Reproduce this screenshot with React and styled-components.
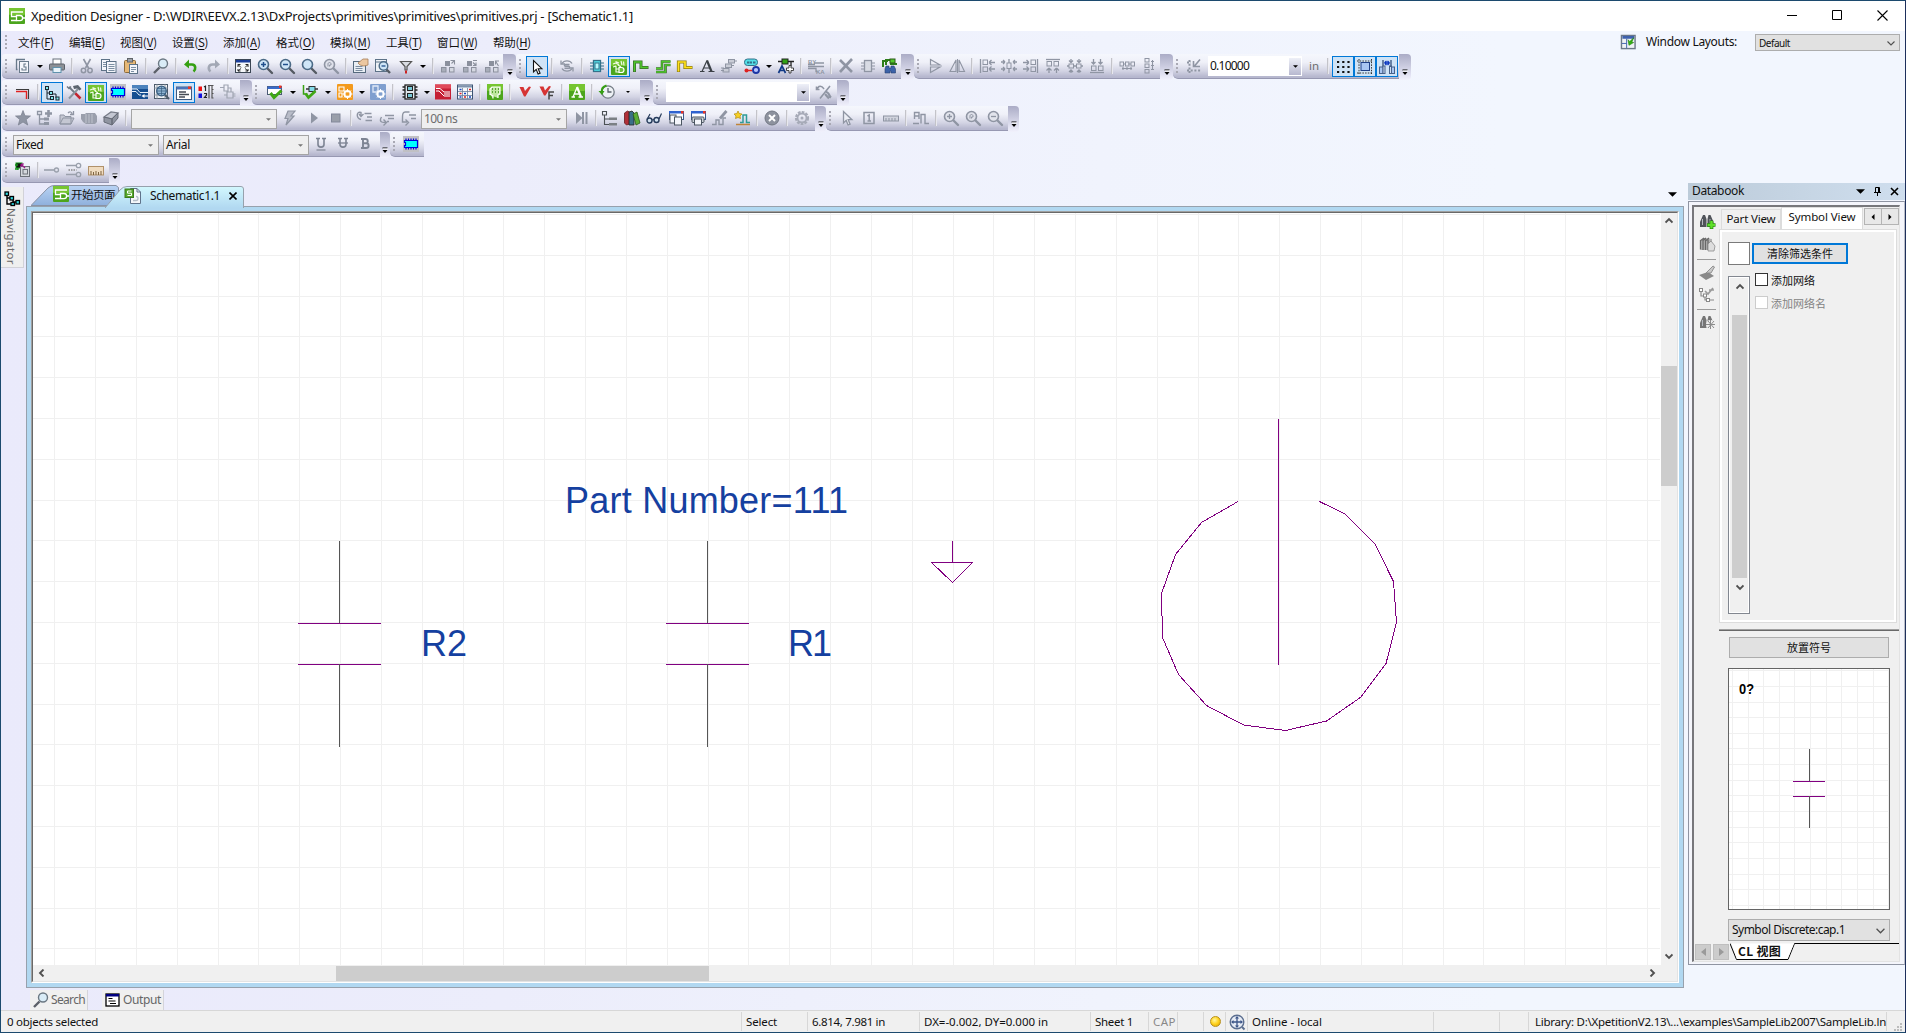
import React, { useLayoutEffect, useRef, useState } from 'react';
import styled, { createGlobalStyle, css } from 'styled-components';

const UI = `"Noto Sans", "Noto Sans CJK SC", sans-serif`;
const CJK = `"Noto Sans CJK SC", "Noto Sans", sans-serif`;

const Global = createGlobalStyle`
  * { box-sizing: border-box; }
  html, body { margin: 0; padding: 0; overflow: hidden; }
  body { font: 12px ${UI}; color: #000; }
  svg { display: block; flex: none; }
`;

/* ---------- text that keeps a fixed run length ---------- */

const TextRun = styled.span`
  display: inline-block;
  flex: none;
  white-space: pre;
  font-family: ${(p) => (p.$cjk ? CJK : UI)};
  font-size: ${(p) => p.$size || 11.5}px;
  font-weight: ${(p) => (p.$bold ? 700 : 400)};
  color: ${(p) => p.$color || '#111'};
  line-height: 16px;
  u { text-underline-offset: 2px; }
`;

function Label({ width, size, cjk, bold, color, vertical, children }) {
  const ref = useRef(null);
  const [spacing, setSpacing] = useState(0);
  useLayoutEffect(() => {
    if (!width || !ref.current) return;
    const el = ref.current;
    const r = document.createRange();
    r.selectNodeContents(el);
    const box = r.getBoundingClientRect();
    const natural = vertical ? box.height : box.width;
    setSpacing((width - natural) / el.textContent.length);
  }, [width, vertical]);
  return (
    <TextRun ref={ref} $size={size} $cjk={cjk} $bold={bold} $color={color} style={{ letterSpacing: spacing }}>
      {children}
    </TextRun>
  );
}

/* ---------- icons ---------- */

const G = '#8f95a3';
const D = '#4a5560';

const P = ({ d, s = G, w = 1.3, f = 'none' }) => <path d={d} stroke={s} strokeWidth={w} fill={f} />;
const R = ({ x, y, w, h, f = 'none', s = 'none', r = 0, sw = 1 }) => (
  <rect x={x} y={y} width={w} height={h} fill={f} stroke={s} rx={r} strokeWidth={sw} />
);

const Lens = ({ c = '#4b6a86', f = '#cfe6f7', h = '#555b63' }) => (
  <>
    <path d="M10 10l5 5" stroke={h} strokeWidth="2.4" strokeLinecap="round" />
    <circle cx="6.5" cy="6.5" r="5" fill={f} stroke={c} strokeWidth="1.6" />
  </>
);
const GreenTile = ({ children }) => (
  <>
    <rect x="0" y="0" width="16" height="16" rx="1" fill="#4ca51d" />
    <rect x="0" y="0" width="16" height="7" rx="1" fill="#76c531" />
    {children}
  </>
);
const Logo = () => (
  <GreenTile>
    <path d="M14 4H2.500v4.500H8M2 12.500h5.500" stroke="#fff" strokeWidth="1.3" fill="none" />
    <path d="M7.500 7.500H11a2.600 2.600 0 010 5.200H7.500zM13.500 10H16" stroke="#fff" strokeWidth="1.3" fill="none" />
  </GreenTile>
);
const GateTile = () => (
  <GreenTile>
    <path d="M2 5l3-1 3 2M2 8l3-1M4.500 2.500L8 4M10 2l1 4M12.500 2.500l.5 4M7 6l3 2M5 7v6h3M5 10h3" stroke="#f0fbe6" strokeWidth="1.2" fill="none" />
    <path d="M8 8.500h2.500a2.500 2.500 0 010 5H8z" fill="#6fbf3c" stroke="#fff" strokeWidth="1.2" />
  </GreenTile>
);
const Chip = () => (
  <>
    <rect x="0" y="0" width="16" height="16" fill="#c0c0c4" />
    <path d="M3 2.500v11M5.500 2.500v11M8 2.500v11M10.500 2.500v11M13 2.500v11" stroke="#0000d8" strokeWidth="1.2" />
    <path d="M1.500 4.500h13v7h-13v-2h1v-3h-1z" fill="#00ffff" stroke="#0000e0" strokeWidth="1.2" />
  </>
);
const Boxes = ({ extra }) => (
  <>
    <R x={1.500} y={9.500} w={4.500} h={4.500} f="#a8adb9" s="#8b909d" />
    <R x={5.500} y={3.500} w={4} h={4} f="#8b909d" s="#8b909d" />
    <R x={9.500} y={9.500} w={4.500} h={4.500} f="#d5d8e2" s="#8b909d" />
    <P d={extra} s="#8b909d" w={1.100} />
  </>
);
const Pins = ({ c, f = 'none' }) => (
  <>
    <path d="M1 5h3M1 8h3M1 11h3M12 5h3M12 8h3M12 11h3M6 2v12" stroke={c} strokeWidth="1.2" />
    <rect x="4.500" y="2.500" width="7" height="11" fill={f} stroke={c} strokeWidth="1.3" />
  </>
);
const Tick = () => <path d="M3.500 9l3.500 4.500 7.500-7" stroke="#3fa714" strokeWidth="3" fill="none" />;
const Binoc = ({ c = '#50545a', extra }) => (
  <>
    <path d="M4 2h2l1.500 4V14H1V9zM9.500 2h2L14.500 9v5H8.500V6z" fill={c} />
    <path d="M3.500 6v6M11 6v6" stroke="#b5b9bf" strokeWidth="1" />
    {extra}
  </>
);
const Sheet = ({ x, y, c, w = 8, h = 11, f = '#f4f6fb' }) => <rect x={x} y={y} width={w} height={h} fill={f} stroke={c} />;

const ICONS = {
  copyView: <><P d="M2.500 11.500h-1V1.500H10" s="#68798a" /><Sheet x={4.500} y={3.500} w={9} h={11} c="#68798a" /><P d="M7 10v2h4V9H9V6h2" s="#68798a" w={1.100} /></>,
  print: <><R x={4} y={1} w={8} h={6} f="#fff" s="#68707a" /><R x={0.500} y={6} w={15} h={6} r={1} f="#8c9096" s="#5b6068" /><R x={4} y={9.500} w={8} h={5} f="#e9f3fa" s="#5f92ad" /></>,
  cut: <><P d="M4.500 1l5 9M11.500 1l-5 9" w={1.600} /><circle cx="4.500" cy="12.500" r="2.200" fill="none" stroke={G} strokeWidth="1.500" /><circle cx="11" cy="12.500" r="2.200" fill="none" stroke={G} strokeWidth="1.500" /></>,
  copy: <><Sheet x={0.500} y={1.500} w={8} h={11} c="#5d7287" /><Sheet x={5.500} y={3.500} w={9.500} h={11} c="#5d7287" /><P d="M7.500 6.500h6M7.500 8.500h6M7.500 10.500h6M7.500 12.500h6M2 4.500h3M2 6.500h3M2 8.500h3" s="#7c8fa3" w={1} /></>,
  paste: <><R x={1.500} y={2.500} w={11} h={12} r={1} f="#e6b877" s="#8c6a39" /><R x={4.500} y={0.500} w={5} h={3.500} f="#9da1a6" s="#60646a" /><Sheet x={6.500} y={6.500} w={8} h={9} c="#5d7287" /><P d="M8 9.500h5M8 11.500h5M8 13.500h3" s="#7c8fa3" w={1} /></>,
  find: <><P d="M6.500 9.500L1 15" s="#5c6068" w={2.400} /><circle cx="10" cy="5.500" r="4.500" fill="#d9ecf7" stroke="#6b7883" strokeWidth="1.400" /></>,
  undo: <><P d="M5 6.500h4c4 0 4 5 1.500 7" s="#35a012" w={2.600} /><path d="M1 6.500l5-5v9z" fill="#35a012" /></>,
  redo: <><P d="M11 6.500H7.500c-4.500 0-4.500 5-2 7" s="#a3a8b5" w={2.600} /><path d="M15 6.500l-5-5v9z" fill="#a3a8b5" /></>,
  fit: <><R x={0.500} y={1.500} w={15} h={13} f="#f5f7fa" s="#3b4654" /><R x={1} y={2} w={14} h={2.500} f="#1a3d9a" /><P d="M3 9V6.500h2.500M3 6.500l3 3M13 9V6.500h-2.500M13 6.500l-3 3M3 11v2h2.500M13 11v2h-2.500M3 13l3-2.500M13 13l-3-2.500" s="#222" w={1} /></>,
  zoomIn: <><Lens /><P d="M4 6.500h5M6.500 4v5" s="#20508c" w={1.500} /></>,
  zoomOut: <><Lens /><P d="M4 6.500h5" s="#20508c" w={1.500} /></>,
  zoom: <Lens />,
  zoomOff: <><Lens c={G} f="#dfe1ea" h={G} /><path d="M5 8.500V6c0-2 3-2 3 0v1H6.500v1.500" fill="none" stroke={G} /></>,
  zoomInOff: <><Lens c={G} f="#e2e4ec" h={G} /><P d="M4 6.500h5M6.500 4v5" /></>,
  zoomOutOff: <><Lens c={G} f="#e2e4ec" h={G} /><P d="M4 6.500h5" /></>,
  props: <><R x={0.500} y={3.500} w={12} h={11} f="#e9eef4" s="#566a7e" /><P d="M2.500 8.500h7M2.500 10.500h7M2.500 12.500h7" s="#7b8ca0" w={1} /><path d="M5 5l5-4h5v6l-4 1-4-1z" fill="#ecc7a0" stroke="#a87f58" strokeWidth="0.800" /></>,
  findPage: <><R x={0.500} y={1.500} w={11} h={12} f="#eef2f6" s="#5d7287" /><P d="M1 4h10" s="#5d7287" w={1} /><P d="M11 11l4 4" s="#555b63" w={2.400} /><circle cx="8.500" cy="8" r="4.300" fill="#cfe6f7" stroke="#4b6a86" strokeWidth="1.400" /><P d="M6.500 8h4" s="#20508c" /></>,
  filter: <><path d="M2.500 3.500h11L9 8.500V12H7V8.500z" fill="#d9dce2" stroke="#555" strokeWidth="1.200" /><R x={7} y={12.500} w={2} h={3} f="#c22" /></>,
  hier1: <Boxes extra="M10.500 2.500h4v4M11.500 5.500l3-3" />,
  hier2: <Boxes extra="M11 2.500h4M11 4.500l3 3M14 4.500v3h-3" />,
  hier3: <Boxes extra="M11.500 3l3 5M15 3h-3.500v3.500" />,
  pointer: <path d="M4.500 1.500v11.500l2.700-2.600 1.900 4.600 2-0.800-1.900-4.500h3.700z" fill="#fff" stroke="#111" strokeWidth="1.100" />,
  pointerOff: <path d="M4.500 1.500v11.500l2.700-2.600 1.900 4.600 2-0.800-1.900-4.500h3.700z" fill="#eceef5" stroke={G} strokeWidth="1.300" />,
  reload: <><P d="M3 5.500c2-3.500 8-3.500 10 0M13 10.500c-2 3.500-8 3.500-10 0M10.500 6.500H6.500c-1.500 0-1.500 1.700 0 1.700h3c1.500 0 1.500 2 0 2H5.500" w={1.400} /><P d="M2 2.500v3.500h4M14 13.500V10h-4" /></>,
  chip: <><Pins c="#35718a" f="#52e0e8" /><R x={6} y={5} w={4} h={6} f="#b7fbff" s="#35718a" /></>,
  gate: <GateTile />,
  wire: <><P d="M1.500 14V4H8v5.500h7.500" s="#3b6a2c" w={3} /><P d="M1.500 13.500V4H8v5.500h7" s="#4fc92b" w={1.500} /></>,
  bus: <><P d="M1 10.500h6v-7h8.500M1 14h9.500V7h5" s="#3b6a2c" w={2.600} /><P d="M1 10.500h6v-7h8.500M1 14h9.500V7h5" s="#4fc92b" w={1.300} /></>,
  net: <><P d="M1.500 14V4H8v5.500h7.500" s="#8c7a10" w={3.200} /><P d="M1.500 13.500V4H8v5.500h7" s="#ffe21c" w={1.700} /></>,
  bigA: <><P s="#3b4046" w={1.200} d="M3 13.500L8 2.500M5 10h6M1 13.500h4.500M9.500 13.500h6" /><P s="#3b4046" w={2.200} d="M8 2.500l4.500 11" /></>,
  array: <><R x={7.500} y={1.500} w={6} h={3.500} f="#c9ccd6" s={G} /><R x={4.500} y={6} w={6} h={3.500} f="#c9ccd6" s={G} /><R x={2} y={10.500} w={6} h={3.500} f="#c9ccd6" s={G} /><P d="M13 3h3M10 7.500h3M0 12.500h3M0 10h3" w={1} /></>,
  linkNets: <><R x={0.500} y={1} w={13} h={6.500} r={3} f="#52e0e8" s="#35718a" /><P d="M3 4.500h2.500M6 4.500h2M9 4.500h2.500" s="#35718a" w={2} /><P d="M2.500 12.500h6" s="#d22" w={1.500} /><circle cx="2.500" cy="12.500" r="2" fill="#d22" /><circle cx="12" cy="12" r="3" fill="#b7c5ff" stroke="#1c36a5" strokeWidth="1.800" /></>,
  textAdd: <><R x={4} y={1} w={6} h={5} f="#31a214" s="#222" /><P d="M0 3.500h4M10 3.500h6M13 3.500v5" s="#222" /><P d="M0.500 15L4 8l3.500 7M2 12.500h4" s="#123a86" w={1.700} /><path d="M11 7.500h2v2.500h2.500v2.500H13V15h-2v-2.500H8.500V10H11z" fill="#fff" stroke="#333" strokeWidth="0.900" /></>,
  breaks: <><P d="M0 8.500h16M0 6.500h7M6 5h10M0 10.500h8v3h1" w={1.300} /><text x="0" y="5.500" fontSize="6" fontWeight="700" fill={G} fontFamily="Liberation Sans">BY</text><text x="8" y="16" fontSize="6" fontWeight="700" fill={G} fontFamily="Liberation Sans">KA</text></>,
  del: <P d="M2 2l12 12M14 1L2 14" w={2.600} />,
  chipOff: <Pins c={G} f="#d8dbe4" />,
  findChip: <><P d="M1 9V3h5M4 7V2h5v4h6" s="#2d7d1a" w={2} /><R x={8} y={1} w={5} h={4} f="#52c92b" s="#2d5a1a" /><path d="M4 8h3v2h2V8h3l1.500 3v4H9v-2H8v2H3v-4z" fill="#3c62a8" stroke="#253f70" strokeWidth="0.600" /></>,
  flipV: <P d="M3.500 7V1.500L13 7zM3.500 9v5.500L13 9z" w={1.200} />,
  flipH: <P d="M7 2v11.500H1zM10 2v11.500h5.500zM8.500 1v14" w={1.100} />,
  alLeft: <><P d="M1.500 1v14" /><R x={4} y={2} w={4.500} h={4.500} s={G} /><R x={4} y={9} w={4.500} h={4.500} s={G} /><P d="M10 4.500h6M10 4.500l2.500-2.500M10 4.500l2.500 2.500M10 11h6M10 11l2.500-2.500M10 11l2.500 2.500" /></>,
  alMid: <><R x={6} y={5} w={4} h={5.500} s={G} /><P d="M8 1v4M8 10.500V15M0 4h4M4 4L2 2M4 4L2 6M0 11h4M4 11l-2-2M4 11l-2 2M16 4h-4M12 4l2-2M12 4l2 2M16 11h-4M12 11l2-2M12 11l2 2" /></>,
  alRight: <><P d="M14.500 1v14" /><R x={8} y={2} w={4.500} h={4.500} s={G} /><R x={8} y={9} w={4.500} h={4.500} s={G} /><P d="M0 4.500h6M6 4.500L3.500 2M6 4.500L3.500 7M0 11h6M6 11l-2.500-2.500M6 11l-2.500 2.500" /></>,
  alTop: <><P d="M1 1.500h14" /><R x={2} y={3.500} w={4.500} h={4.500} s={G} /><R x={9} y={3.500} w={4.500} h={4.500} s={G} /><P d="M4 15v-5M4 10l-2.500 2.500M4 10l2.500 2.500M11.500 15v-5M11.500 10L9 12.500M11.500 10l2.500 2.500" /></>,
  alCenter: <><R x={2} y={6} w={4.500} h={4} s={G} /><R x={9.500} y={6} w={4.500} h={4} s={G} /><P d="M0 8h2M6.500 8h3M14 8h2M4 1v3M2 2.500l2 2 2-2M12 1v3M10 2.500l2 2 2-2M4 15v-3M2 14l2-2 2 2M12 15v-3M10 14l2-2 2 2" /></>,
  alBottom: <><P d="M1 14.500h14" /><R x={2.500} y={8} w={4.500} h={4.500} s={G} /><R x={9.500} y={8} w={4.500} h={4.500} s={G} /><P d="M4.500 1v5M2.500 4l2 2 2-2M11.500 1v5M9.500 4l2 2 2-2" /></>,
  distH: <><R x={1} y={4} w={3.500} h={4} s={G} /><R x={6.500} y={4} w={3.500} h={4} s={G} /><R x={12} y={4} w={3.500} h={4} s={G} /><P d="M3 10.500h10M4 9v3M8 9v3M12 9v3M4 6h3M9 6h3" w={1.100} /></>,
  distV: <><R x={4} y={0.500} w={4} h={3.500} s={G} /><R x={4} y={6} w={4} h={3.500} s={G} /><R x={4} y={11.500} w={4} h={3.500} s={G} /><P d="M11.500 2v10M10 3.500h3M10 7.500h3M10 11.500h3" w={1.100} /></>,
  snap: <><path d="M3.500 2v13M1 12.500h14M1 4.500h4" stroke={G} strokeWidth="2" strokeDasharray="2 1.700" fill="none" /><P d="M14 1.500L8.500 8M7.500 3v5.500H14" w={1.600} /></>,
  dots: <path d="M2 3h13M2 8h13M2 13h13" stroke="#111" strokeWidth="2.200" strokeDasharray="2.200 3" />,
  crop: <><R x={4} y={3.500} w={8.500} h={8} f="#a9c6f2" s="#1f3f86" /><path d="M2 0v16M14.500 0v16M0 2h16M0 14h16" stroke="#333" strokeWidth="1" strokeDasharray="1.500 1.200" /></>,
  fence: <><P d="M4 1v7M12 1v7" s="#47618a" w={1.500} /><P d="M5.500 4h5M5.500 4l2-2M5.500 4l2 2M10.500 4l-2-2M10.500 4l-2 2" s="#0a36c0" /><R x={0.500} y={8} w={3.500} h={6.500} f="#a9c6f2" s="#47618a" /><R x={4} y={7} w={2} h={7.500} f="#cfe0f8" s="#47618a" /><R x={10.500} y={7} w={2} h={7.500} f="#cfe0f8" s="#47618a" /><R x={12.500} y={8} w={3} h={6.500} f="#a9c6f2" s="#47618a" /></>,

  corner: <><P d="M1 5.500h12.500V15" s="#3b3b3b" w={1.100} /><P d="M1 7.500h10.500V15" s="#e02020" w={1.400} /></>,
  tree: <><P d="M3 4v10h3M3 8h3M9 9h3v4" s="#1a2630" w={1} /><R x={1.500} y={1.500} w={3} h={3} f="#7fe9ee" s="#1a2630" /><R x={5.500} y={6.500} w={3} h={3} f="#7fe9ee" s="#1a2630" /><R x={6.500} y={11.500} w={3} h={3} f="#7fe9ee" s="#1a2630" /><R x={12} y={12} w={3} h={3} f="#7fe9ee" s="#1a2630" /></>,
  tools: <><P d="M9 9l5.500 5.500" s="#c32530" w={2.500} /><P d="M3 3l6 6" s="#707a84" w={1.800} /><path d="M7 2l5-1 3.500 4-2 1.500L11 4.500 8 5z" fill="#5d6670" /><P d="M12 5L3 14.500" s="#8a939c" w={2} /><P d="M1 2.500l2 2 2-2" s="#707a84" w={1.500} /></>,
  chipBlue: <Chip />,
  waveBlue: <><R x={0} y={1} w={16} h={14} f="#164f91" /><R x={0} y={1} w={16} h={4} f="#4c83bd" /><P d="M0 5h5l3 3.500h8M0 7.500h4l3 3.500h2" s="#e8f1fa" w={1} /><path d="M9.500 12l3-2v1.400H16v1.200h-3.500V14z" fill="#fff" /></>,
  globeFind: <><R x={0.500} y={0.500} w={13} h={14} f="#eef1f4" s="#4b5a6a" /><P d="M3 0v15M11 0v15M0 4h14M0 11h14" s="#7f8b98" w={0.800} /><P d="M11 11l4 4" s="#4b5a6a" w={2.200} /><circle cx="7.500" cy="7" r="4.800" fill="#8fb4d2" stroke="#365d80" strokeWidth="1.300" /><P d="M3 7h9M7.500 2.500v9M4 4.500h7M4 9.500h7" s="#365d80" w={0.700} /></>,
  output: <><R x={0.500} y={2} w={15} h={12.500} f="#fff" s="#3e5a80" /><R x={0.500} y={2} w={15} h={2.500} f="#4a73b8" /><R x={12} y={1.500} w={3} h={2.500} f="#e32" /><P d="M3 7h7M3 9.500h10M3 12h6" s="#454b55" /></>,
  order: <><R x={0.500} y={2.500} w={3.500} h={4.500} f="#e11" /><R x={0.500} y={9.500} w={3.500} h={4.500} f="#11d" /><P d="M7.500 1.500v5.500M6 3l1.500-1M6 9.500h2.500v1.500L6.500 13.500H9" s="#222" w={1.200} /><P d="M11 1.500v13M14 1.500v13M10 1.500h5.500M14 5.500h1.500M14 9.500h1.500M14 14h1.500" s="#555" w={1.200} /></>,
  gatesOff: <><P d="M0 3.500h4M4 1h4v6H4zM8 4h3v4M7 8h6v6H7zM4 11h3M13 10h2.500M13 12h2.500" s="#a0a5b2" w={1.200} /></>,
  check1: <><R x={0.500} y={2.500} w={14} h={8} f="#fff" s="#4a5a75" /><R x={0.500} y={2.500} w={14} h={2.500} f="#3a6bc9" /><R x={12} y={1.500} w={2.500} h={2.500} f="#e32" /><Tick /></>,
  check2: <><P d="M1.500 1v9h4" s="#39a312" w={1.500} /><R x={7} y={2.500} w={6} h={5} f="#84dbe8" s="#333" /><P d="M4 5h3M13 5h3" s="#333" /><path d="M3.500 9.500l3 4 7-6.500" stroke="#3fa714" strokeWidth="2.800" fill="none" /></>,
  gearOrange: <><R x={0} y={0} w={16} h={16} r={1} f="#f39a1c" /><P d="M2 3h5v4H2zM2 9h3v4H2z" s="#fff" w={1.100} /><circle cx="10.500" cy="10" r="3.200" fill="none" stroke="#fff" strokeWidth="1.700" /><path d="M10.500 5v10M5.500 10h10M7 6.500l7 7M14 6.500l-7 7" stroke="#fff" strokeWidth="1" /><circle cx="10.500" cy="10" r="1.700" fill="#f39a1c" /></>,
  gearBlue: <><R x={0} y={0} w={16} h={16} r={1} f="#7f9fcf" /><P d="M3 2h5v6H3z" s="#dfe9f8" w={1.300} /><circle cx="10.500" cy="10" r="3.200" fill="none" stroke="#fff" strokeWidth="1.700" /><path d="M10.500 5v10M5.500 10h10M7 6.500l7 7M14 6.500l-7 7" stroke="#fff" strokeWidth="1" /><circle cx="10.500" cy="10" r="1.700" fill="#7f9fcf" /></>,
  film: <><R x={3} y={1} w={10} h={14} f="#dfe6ea" s="#222" sw={1.300} /><R x={5.500} y={2.500} w={5} h={4} f="#78c9d8" s="#222" /><R x={5.500} y={9.500} w={5} h={4} f="#78c9d8" s="#222" /><P d="M0.500 3H3M0.500 6H3M0.500 10H3M0.500 13H3M13 3h2.500M13 6h2.500M13 10h2.500M13 13h2.500" s="#222" w={1.600} /></>,
  waveRed: <><R x={0} y={0.500} w={16} h={15} f="#c51f34" /><R x={0} y={0.500} w={16} h={4} f="#e04a5a" /><P d="M1 4.500h4l4 3.500h6M1 7h3l5 5h6M9 10h6" s="#fff" w={1} /></>,
  calendar: <><R x={0.500} y={1} w={15} h={14} f="#f7f9fb" s="#3b5373" /><R x={1} y={1.500} w={14} h={2} f="#7f93ad" /><P d="M5.500 4v11M10.500 4v11M1 7.500h14M1 11.500h14" s="#6d7f97" w={0.800} /><P d="M2.500 5.500h2M7 9.500h2M12 13h2M2.500 13h2" s="#1446c5" w={1.500} /><P d="M7 13h2M12 5.500h2M2.500 9.500h2" s="#d22" w={1.500} /></>,
  greenMap: <GreenTile><path d="M3 11V5l2-2h8v7l-2 1v3M3 10l3 2v2.500" fill="#bfe6a0" stroke="#fff" strokeWidth="1.200" /><path d="M5 5h1M8 5h1M11 5h1M5 8h1M8 8h1M11 8h1" stroke="#3b9015" strokeWidth="1.400" /></GreenTile>,
  redV: <path d="M2.500 3h4l1.500 4 4-4.500L14 3 8.500 12.500 7 12.500z" fill="#d63434" />,
  redVF: <><path d="M0.500 2.500h4l1.500 4 4-4.500 2 .5-5.500 9H5z" fill="#d63434" /><P d="M10 15.500V8h5M10 11.500h4" s="#444" w={1.500} /></>,
  greenA: <GreenTile><path d="M4 13L8 3.500M5.500 10h5M2.500 13h3.500M9.500 13h4.500" fill="none" stroke="#fff" strokeWidth="1.300" /><path d="M8 3l4 10" stroke="#fff" strokeWidth="2.200" /></GreenTile>,
  clock: <><circle cx="9" cy="8" r="6.200" fill="#edf1f5" stroke="#737b85" strokeWidth="1.300" /><P d="M9 4v4h3.500" s="#59616b" /><P d="M7.500 1.500C4 2.500 2.500 5 2.800 8" s="#35a012" w={2.200} /><path d="M-0.500 7h6L3 11z" fill="#35a012" /></>,
  brush: <><P d="M0.500 5.500L3 2.500c3-1 4 1 5 2.500M0.500 2.500v3h3M14 2L4 14.500" w={1.600} /><P d="M10 8c3 0 3 4 5 5.500M9 10l4 4.500" w={2.200} /></>,

  star: <path d="M8 0.500l2 5.300 5.500.2-4.300 3.500 1.500 5.500L8 12l-4.700 3 1.500-5.500L.5 6 6 5.800z" fill={G} stroke="#787e8c" strokeWidth="0.700" />,
  treeAdd: <><P d="M2.500 4.500V14H7M2.500 9H7M0.500 1.500h4v3h-4z" /><R x={7} y={7.500} w={5} h={3} f={G} /><R x={7} y={12} w={5} h={3} f={G} /><P d="M11.500 0v7M8 3.500h7" w={2.600} /></>,
  folder: <><path d="M1 14V5h4l1 1.500h6V14zM1 14l3-6h11l-3 6z" fill="#c4c7d2" stroke={G} /><P d="M9 3c2-2 4-1 4 1M14.500 1v3.500H11" /></>,
  coil: <><path d="M0 4h4l1-1h9l2 3v6l-2 2H5l-3-2-2-3z" fill="#9a9fac" /><P d="M5 4v9M8 4v9M11 4v9" s="#c3c6d0" w={0.900} /></>,
  books2: <><path d="M1 7l7-5 7 1-6 6z" fill="#c4c7d2" stroke="#777c88" strokeWidth="1.200" /><path d="M1 7l8 2v6l-8-3zM9 9l6-6v5l-6 7z" fill="#9095a1" stroke="#666b77" strokeWidth="1" /></>,
  bolt: <path d="M6 1h7L9 6h3L4 15l2-6.500H3z" fill="#b8bcc8" stroke={G} strokeWidth="1.200" />,
  play: <path d="M5 2.500v11l7-5.500z" fill={G} />,
  stop: <R x={3.500} y={4} w={8.500} h={8} f="#9a9faa" s="#82889a" />,
  step1: <P d="M4 9.500C-1 8-1 1 4 2.500V6M2 4l2 2.500L6.500 4M7.500 3.500h7M10 7h5M8.500 10.500H15" w={1.400} />,
  step2: <P d="M2.500 7c-3 5 1 6 4.500 5M4.500 9.500l3 3-3 3M6 5.500h9M9 8.500h6M8 11.500h2" w={1.400} />,
  step3: <P d="M8.500 2H4C1 2 1.500 6 1.500 12H6M4.500 9.500l3 3-3 3M8 5h7M10 8.500h5" w={1.400} />,
  skip: <><path d="M2 2v12l6.500-6z" fill={G} /><P d="M9 2v12M12.500 2v12" w={2} /></>,
  treeList: <><P d="M2.500 5v9.500H7M2.500 9H7M0.500 1.500h4v3.500h-4z" s="#4b5054" w={1.100} /><R x={7} y={7.500} w={8} h={2.500} f="#7b8084" /><R x={7} y={13} w={8} h={2.500} f="#7b8084" /></>,
  books: <><path d="M0.500 3l3-2 2 1v12l-3 1-2-2z" fill="#b03038" stroke="#661c20" strokeWidth="0.800" /><path d="M5 2l3-1 2 2v12H5z" fill="#3a6f88" stroke="#222" strokeWidth="0.800" /><path d="M9 4l4-2 3 11-4 2z" fill="#5cae35" stroke="#27581a" strokeWidth="0.800" /></>,
  glasses: <><circle cx="3.500" cy="10.500" r="2.500" fill="#d5e5f2" stroke="#273c5c" strokeWidth="1.400" /><circle cx="10.500" cy="10" r="2.500" fill="#d5e5f2" stroke="#273c5c" strokeWidth="1.400" /><P d="M1 9.500L4 4M13 9l2.500-5.500M6 10l2-.5" s="#273c5c" w={1.200} /></>,
  winCopy: <><R x={1.500} y={1.500} w={14} h={8} f="#fff" s="#3a5b90" /><R x={1} y={1} w={14.500} h={2.500} f="#2e62d0" /><R x={13} y={1} w={2.500} h={2.500} f="#e32" /><Sheet x={2} y={5} w={6} h={8} c={D} /><Sheet x={6.500} y={7} w={7} h={8} c={D} /></>,
  winPrint: <><R x={1.500} y={1.500} w={14} h={8} f="#fff" s="#3a5b90" /><R x={1} y={1} w={14.500} h={2.500} f="#2e62d0" /><R x={13} y={1} w={2.500} h={2.500} f="#e32" /><R x={2} y={7} w={12} h={5.500} r={1} f="#cdd2d8" s={D} /><Sheet x={4.500} y={9} w={7} h={6} c={D} /></>,
  waveBrush: <><P d="M0 14.500h4V10h3v4.500h4V8h3" w={1.400} /><P d="M14.500 1L8 8.500" w={2.800} /></>,
  waveStar: <><P d="M6 12.500h3V5h3.500v7.500H16" s="#2e9c98" w={1.500} /><path d="M4 1l1.200 2.500L8 4 6 6l.5 2.500L4 7.500 1.500 8.500 2 6 0 4l2.800-.5z" fill="#f5cf25" stroke="#b08a10" strokeWidth="0.700" /><P d="M2 14.500h14" s="#c08438" w={1.500} /></>,
  stopX: <><circle cx="8" cy="8" r="7" fill="#8d929e" stroke="#737884" /><P d="M5 5l6 6M11 5l-6 6" s="#fff" w={2} /></>,
  gearOff: <><circle cx="8" cy="8" r="5.700" fill="none" stroke="#a7abb8" strokeWidth="2.800" strokeDasharray="2.600 1.100" /><circle cx="8" cy="8" r="4.500" fill="none" stroke="#a7abb8" strokeWidth="1.800" /><circle cx="8" cy="8" r="1.500" fill="#a7abb8" /></>,
  one: <><R x={3} y={2.500} w={10} h={11} s={G} sw={1.500} /><P d="M6.500 6l1.700-1V11M6.500 11h3.500" w={1.500} /></>,
  ruler: <><R x={0.500} y={6} w={15} h={5} f="#d0d3dd" s={G} /><P d="M3 8v3M6 8v3M9 8v3M12 8v3" w={1} /></>,
  waveA: <><P d="M1.500 9V2.500h4.500v6.500M1.500 6h4.500M0 13.500h6M8 13.500V4.500h4v9h4" w={1.400} /></>,
  under: <><P d="M5 2.500v6c0 3.500 6 3.500 6 0v-6M3 2.500h4M9 2.500h4" s="#7d8493" w={1.600} /><P d="M3.500 14h9" s="#7d8493" w={1.200} /></>,
  strike: <><P d="M5 2.500v6c0 3.500 6 3.500 6 0v-6M3 2.500h4M9 2.500h4" s="#7d8493" w={1.600} /><P d="M3 7h10" s="#7d8493" w={1.300} /></>,
  boldB: <P d="M6 3v9M4 3h4.500c3 0 3 4.300 0 4.300H6M9 7.300c3.500 0 3.500 4.700 0 4.700H4" s="#7d8493" w={1.900} />,
  merge: <><R x={1} y={1} w={6} h={5} f="#111" s="#12911a" /><P d="M0 3h3M0 7h3M3 6v2" s="#12911a" w={1.300} /><R x={5.500} y={4.500} w={9} h={10} f="#d5d8dd" s="#6c7078" /><R x={8} y={7.500} w={4.500} h={4.500} s="#6c7078" /><P d="M6 2l4 4M6 2v3M6 2h3" s="#a0128a" w={1.100} /></>,
  pin1: <><P d="M0 8h10" s="#9aa0ac" w={1.600} /><circle cx="12.500" cy="8" r="2" fill="none" stroke="#9aa0ac" strokeWidth="1.300" /></>,
  pins: <><P d="M0 3.500h10M0 12.500h10" s="#9aa0ac" w={1.600} /><circle cx="12.500" cy="3.500" r="2.200" fill="none" stroke="#9aa0ac" strokeWidth="1.300" /><circle cx="12.500" cy="12.500" r="2.200" fill="none" stroke="#9aa0ac" strokeWidth="1.300" /><path d="M2.500 8h8" stroke="#888" strokeWidth="1.500" strokeDasharray="1.500 1" /></>,
  rulerTan: <><R x={0.500} y={4.500} w={15} h={8.500} f="#f0dcc0" s="#b0916a" /><P d="M3 9v4M5.500 10v3M8 9v4M10.500 10v3M13 9v4" s="#7c6240" w={1} /></>,

  logo: <Logo />,
  docLogo: <><path d="M5.500 0.500H12l3.500 3.500v11.500h-10z" fill="#f5f7fa" stroke="#60738a" /><P d="M12 0.500V4h3.500" s="#60738a" w={1} /><R x={0} y={1} w={8.500} h={8.500} f="#55a82a" s="#3b7a1c" /><P d="M6.500 3H2.500v2.200h4v2.300h-4" s="#fff" w={1} /><P d="M8 12.500h3a2 2 0 000-4" s="#b5bec8" /></>,
  layouts: <><R x={0.500} y={0.500} w={14.500} h={14} f="#f0f2f5" s="#6c7888" sw={1.500} /><R x={1.500} y={1} w={12.500} h={3} f="#3f62ad" /><P d="M6 4v10M1 9h5" s="#3f62ad" w={1} /><path d="M13.500 3l-2 5h2l-5 3-1-6 1.800 2z" fill="#35b412" stroke="#1d7d0a" strokeWidth="0.600" /></>,
  binAdd: <Binoc extra={<><P d="M12.500 7.500v8.500M8 12h8.500" s="#1d7d0a" w={3.600} /><P d="M12.500 8v7.500M8.500 12h7.500" s="#5fe02a" w={2.400} /></>} />,
  booksOff: <><path d="M1 5l4-3 8 1v11H2L1 12z" fill="#b4b4b4" /><P d="M1.500 5v8.500M4 4v10M6.500 3.500v10.500M9 3.500v10.500M1 5l4-3M4 4.500l3-2.500M7 4.500L10 2" s="#686868" /><path d="M9 8l3-3 4 5-1 5H9z" fill="#dedede" stroke="#8b8b8b" strokeWidth="0.800" /></>,
  placeOff: <><path d="M0 10l9-3 6 4-8 4z" fill="#8a8a8a" /><path d="M6 9l4-4 4-4 1.500 1L12 8H8z" fill="#c9c9c9" stroke="#888" strokeWidth="0.900" /></>,
  netOff: <><P d="M2 4v5h4v4h9" s="#888" w={1.100} /><R x={0.500} y={1.500} w={3} h={3} f="#fff" s="#888" /><R x={4.500} y={7} w={3} h={3} f="#fff" s="#888" /><R x={7.500} y={11.500} w={3} h={3} f="#fff" s="#888" /><P d="M6 4l3 3 5-6M10 3h5" s="#9a9a9a" w={1.700} /></>,
  binOff: <Binoc c="#767676" extra={<><circle cx="11.500" cy="10.500" r="4.500" fill="#efefef" /><path d="M9 7l6 7M15 7l-6 7M11.500 6v9M7 10.500h9" stroke="#8b8b8b" strokeWidth="1" /></>} />,
  naviTree: <><P d="M3 3v10h6M3 7h4M9 8v3h4" s="#000" w={1.400} /><R x={1} y={1} w={3.500} h={3.500} f="#32dfe6" s="#000" sw={1.300} /><R x={6} y={5.500} w={3.500} h={3.500} f="#32dfe6" s="#000" sw={1.300} /><R x={7} y={11.500} w={3.500} h={3} f="#32dfe6" s="#000" sw={1.300} /><R x={12} y={9.500} w={3.500} h={3.500} f="#32dfe6" s="#000" sw={1.300} /></>,
  outTab: <><R x={1} y={2} w={13} h={12} f="#fff" s="#000" sw={1.300} /><R x={1} y={2} w={13} h={2.500} f="#000080" /><P d="M3.500 6.500h4M3.500 9h7M5 11.500h6" s="#000" w={1.200} /></>,
  online: <><circle cx="8" cy="8" r="6.800" fill="#e7ecf5" stroke="#5c6f90" strokeWidth="1.400" /><P d="M8 3v10M3 8h10" s="#3d5688" w={1.300} /><path d="M8 2l2 2.500H6zM8 14l2-2.500H6zM2 8l2.500-2v4zM14 8l-2.500-2v4z" fill="#3d5688" /><P d="M13 13l2.500 2.500" s="#5c6f90" w={2} /></>,
};

function Icon({ name, size = 16 }) {
  return (
    <svg width={size} height={size} viewBox="0 0 16 16" overflow="visible">
      {ICONS[name]}
    </svg>
  );
}

/* ---------- window chrome ---------- */

const Window = styled.div`
  width: 1906px;
  height: 1033px;
  display: flex;
  flex-direction: column;
  border: 1px solid #1c4a6e;
  border-right-color: #1d2f5c;
  background: linear-gradient(90deg, #eaeafb 0, #ecedfb 500px, #f0f3fd 1100px, #f2f6fe 1500px);
  overflow: hidden;
`;
const TitleBar = styled.header`
  height: 30px;
  display: flex;
  align-items: center;
  background: #fff;
  padding: 0 17px 1px 8px;
  gap: 6px;
`;
const Caption = styled.div`
  flex: 1;
  display: flex;
`;
const WinButtons = styled.div`
  display: flex;
  gap: 34px;
`;
const MenuBar = styled.nav`
  height: 23px;
  display: flex;
  align-items: center;
  padding: 0 0 1px 1px;
`;
const MenuItem = styled.div`
  width: ${(p) => p.$w}px;
  display: flex;
  padding-bottom: 1px;
`;
const MenuSpace = styled.div`
  flex: 1;
`;
const LayoutPicker = styled.div`
  display: flex;
  align-items: center;
  padding-right: 5px;
`;
const LayoutLabel = styled.div`
  padding: 0 18px 1px 10px;
  display: flex;
`;
const SelectBox = styled.div`
  width: ${(p) => p.$w}px;
  height: ${(p) => p.$h}px;
  flex: none;
  display: flex;
  align-items: center;
  justify-content: space-between;
  background: #e1e1e1;
  border: 1px solid #adadad;
  padding: ${(p) => p.$pad || '0 4px 0 3px'};
`;

/* ---------- toolbars ---------- */

const ToolRows = styled.div`
  height: 129px;
  flex: none;
`;
const ToolRow = styled.div`
  display: flex;
  height: 26px;
  padding-left: 1px;
`;
const Bar = styled.div`
  display: flex;
  height: 25px;
  flex: none;
  align-items: flex-start;
  background: linear-gradient(#f5f7fd 0, #eff0f8 35%, #d3d4e4 70%, #b6b7ce 95%);
  border-bottom: 1px solid #9798b2;
  border-radius: 3px 0 0 5px;
`;
const GripBox = styled.div`
  width: 10px;
  height: 23px;
  display: flex;
  align-items: center;
  padding-left: 3px;
`;
const Button = styled.div`
  width: ${(p) => p.$w}px;
  height: 21px;
  margin-top: 2px;
  display: flex;
  align-items: center;
  justify-content: center;
  padding-bottom: 1px;
  ${(p) => p.$on && css`
    background: #cfe3f6;
    border: 1px solid #0078d7;
    padding-bottom: 0;
  `}
`;
const Separator = styled.div`
  width: ${(p) => p.$w}px;
  height: 24px;
  display: flex;
  justify-content: center;
  align-items: center;
  &::after {
    content: '';
    width: 1px;
    height: 16px;
    background: #c3c3c9;
    border-right: 1px solid #e8e8ee;
    box-sizing: content-box;
  }
`;
const DropMark = styled.div`
  width: ${(p) => p.$w}px;
  height: 24px;
  display: flex;
  justify-content: center;
  align-items: center;
`;
const Spacer = styled.div`
  width: ${(p) => p.$w || 0}px;
  height: ${(p) => p.$h || 0}px;
  flex: none;
`;
const More = styled.div`
  width: ${(p) => p.$w}px;
  height: 26px;
  flex: none;
  display: flex;
  justify-content: center;
  align-items: flex-end;
  padding-bottom: 4px;
  background: linear-gradient(#abacc6 0, #c3c4d9 35%, #dfdff0 75%, #f1f1fc 100%);
  border-radius: 0 4px 4px 0;
`;
const Combo = styled.div`
  width: ${(p) => p.$w}px;
  height: 20px;
  margin-top: ${(p) => (p.$live ? 2 : 3)}px;
  display: flex;
  align-items: center;
  justify-content: space-between;
  padding: ${(p) => (p.$live ? '0 1px 0 2px' : '0 5px 0 2px')};
  background: ${(p) => (p.$live ? '#fff' : '#efefef')};
  border: ${(p) => (p.$live ? 'none' : '1px solid #a5a5a5')};
`;
const ComboButton = styled.div`
  width: 12px;
  height: 17px;
  display: flex;
  align-items: center;
  justify-content: center;
  background: linear-gradient(#eef0f8, #b7b8cf);
`;
const UnitBox = styled.div`
  width: 22px;
  height: 23px;
  padding-left: 7px;
  display: flex;
  align-items: center;
`;

const Triangle = ({ w = 5, c = '#000' }) => (
  <svg width={w} height={Math.ceil(w / 2)} viewBox="0 0 6 3"><path d="M0 0h6L3 3z" fill={c} /></svg>
);
const Grip = () => (
  <GripBox>
    <svg width="2" height="14" viewBox="0 0 2 14">
      {[0, 4, 8, 12].map((y) => <rect key={y} y={y} width="2" height="2" fill="#a9a9b4" />)}
    </svg>
  </GripBox>
);
const Overflow = ({ w }) => (
  <More $w={w}>
    <svg width="6" height="7" viewBox="0 0 6 7">
      <path d="M0.500 0.500h5v1h-5z" fill="#000" />
      <path d="M1 1.500h5v1H1z" fill="#fff" />
      <path d="M0.500 3h5L3 6z" fill="#000" />
    </svg>
  </More>
);

const combo = (w, text, tw, opt = {}) => ({ kind: 'combo', w, text, tw, ...opt });
const wide = (name, w) => ({ kind: 'wide', name, w });

const TOOLBARS = [
  [
    { more: 13, items: ['copyView', 'v12', 'print', '|8', 'cut', 'copy', 'paste', '|8', 'find', '|8', 'undo', 'redo', '|8', 'fit', 'zoomIn', 'zoomOut', 'zoom', 'zoomOff', '|8', 'props', 'findPage', wide('filter', 23), 'v12', '|8', 'hier1', 'hier2', 'hier3'] },
    { more: 13, items: ['*pointer', '|8', 'reload', '|8', 'chip', '*gate', 'wire', 'bus', 'net', 'bigA', 'array', wide('linkNets', 23), 'v12', 'textAdd', '|8', 'breaks', '|8', 'del', 'chipOff', 'findChip'] },
    { more: 13, items: ['flipV', 'flipH', '|8', 'alLeft', 'alMid', 'alRight', 'alTop', 'alCenter', 'alBottom', '|8', 'distH', 'distV'] },
    { more: 12, items: ['snap', 3, combo(94, '0.10000', 39, { live: true }), { kind: 'unit' }, '|8', '*dots', '*crop', '*fence', 1] },
  ],
  [
    { more: 12, items: ['corner', '|7', '*tree', 'tools', '*gate', 'chipBlue', 'waveBlue', 'globeFind', '*output', 'order', 'gatesOff', 1] },
    { more: 13, items: [2, 'check1', 'v13', 'check2', 'v13', 'gearOrange', 'v11', 'gearBlue', '|8', 2, 'film', 'v11', 'waveRed', 'calendar', '|8', 'greenMap', '|8', 'redV', 'redVF', '|8', 'greenA', '|8', 'clock', 4, 's12', 6] },
    { more: 12, items: [3, combo(144, '', 0, { live: true }), 3, 'brush', 2] },
  ],
  [
    { more: 11, items: ['star', 'treeAdd', 'folder', 'coil', 'books2', '|8', 1, combo(146, '', 0), 2, 'bolt', 2, 'play', 'stop', '|7', 'step1', 'step2', 'step3', 1, combo(146, '100 ns', 33, { color: '#6d6d6d' }), 4, 'skip', '|5', 1, 'treeList', 'books', 'glasses', 'winCopy', 'winPrint', 'waveBrush', 'waveStar', '|8', 'stopX', '|8', 'gearOff', 2] },
    { more: 11, items: ['pointerOff', 'one', 'ruler', '|8', 'waveA', '|8', 'zoomInOff', 'zoomOff', 'zoomOutOff', 2] },
  ],
  [
    { more: 10, items: [1, combo(146, 'Fixed', 27), 4, combo(146, 'Arial', 24), 1, 'under', 'strike', 'boldB', 4] },
    { items: ['chipBlue', 2] },
  ],
  [
    { more: 11, items: ['merge', '|7', 'pin1', 'pins', 'rulerTan', 2] },
  ],
];

function ToolItem({ item }) {
  if (typeof item === 'number') return <Spacer $w={item} />;
  if (typeof item === 'string') {
    const n = Number(item.slice(1));
    if (item[0] === '|') return <Separator $w={n} />;
    if (/^[vs]\d+$/.test(item)) return <DropMark $w={n}><Triangle w={item[0] === 'v' ? 6 : 4} /></DropMark>;
    const on = item[0] === '*';
    return <Button $w={22} $on={on}><Icon name={on ? item.slice(1) : item} /></Button>;
  }
  if (item.kind === 'wide') return <Button $w={item.w}><Icon name={item.name} /></Button>;
  if (item.kind === 'unit') return <UnitBox><Label width={10} color="#6d6d6d">in</Label></UnitBox>;
  return (
    <Combo $w={item.w} $live={item.live}>
      <Label size={12} width={item.tw} color={item.color}>{item.text}</Label>
      {item.live ? <ComboButton><Triangle w={5} /></ComboButton> : <Triangle w={5} c="#777" />}
    </Combo>
  );
}

/* ---------- work area ---------- */

const Work = styled.main`
  display: flex;
  height: 806px;
  flex: none;
`;
const NaviStrip = styled.aside`
  width: 23px;
  height: 81px;
  margin: 4px 2px 0 0;
  flex: none;
  display: flex;
  flex-direction: column;
  align-items: center;
  background: #efefef;
  border-right: 1px solid #d2d2d8;
  border-bottom: 1px solid #d2d2d8;
  padding: 4px 0 0 0;
`;
const NaviText = styled.div`
  writing-mode: vertical-rl;
  margin: 1px 2px 0 0;
`;
const DocColumn = styled.section`
  width: 1658px;
  flex: none;
  display: flex;
  flex-direction: column;
`;
const TabStrip = styled.div`
  height: 23px;
  display: flex;
  align-items: flex-end;
  padding-right: 7px;
`;
const DocTab = styled.div`
  width: ${(p) => p.$w}px;
  height: 21px;
  margin-left: ${(p) => p.$shift}px;
  margin-bottom: ${(p) => (p.$active ? -1 : 0)}px;
  z-index: ${(p) => (p.$active ? 2 : 1)};
  display: grid;
  > * { grid-area: 1 / 1; }
`;
const DocTabBody = styled.div`
  display: flex;
  align-items: center;
  padding-left: ${(p) => p.$pad}px;
  gap: ${(p) => p.$gap}px;
  padding-bottom: 3px;
`;
const TabMenu = styled.div`
  flex: 1;
  display: flex;
  justify-content: flex-end;
  padding-bottom: 9px;
`;
const Frame = styled.div`
  width: 1658px;
  height: 782px;
  border: 1px solid #97a1ad;
  padding: 4px;
  background: #b1d8f1;
`;
const Sunken = styled.div`
  height: 100%;
  border-style: solid;
  border-width: 1px;
  border-color: #a0a0a0 #fff #fff #a0a0a0;
`;
const Viewport = styled.div`
  height: 100%;
  border-style: solid;
  border-width: 1px;
  border-color: #696969 #e3e3e3 #e3e3e3 #696969;
  display: grid;
  grid-template: 752px 16px / 1628px 16px;
  background: #f0f0f0;
`;
const ScrollTrack = styled.div`
  display: flex;
  flex-direction: ${(p) => (p.$vertical ? 'column' : 'row')};
  align-items: center;
  background: #f0f0f0;
`;
const ScrollEnd = styled.div`
  width: ${(p) => p.$w}px;
  height: ${(p) => p.$h}px;
  flex: none;
  display: flex;
  align-items: center;
  justify-content: center;
`;
const Thumb = styled.div`
  width: ${(p) => p.$w}px;
  height: ${(p) => p.$h}px;
  flex: none;
  background: #cdcdcd;
`;
const Grow = styled.div`
  flex: 1;
`;

const CHEVRONS = {
  up: 'M0.500 5.500L4 2l3.500 3.500',
  down: 'M0.500 2.500L4 6l3.500-3.500',
  left: 'M5.500 0.500L2 4l3.500 3.500',
  right: 'M2.500 0.500L6 4l-3.500 3.500',
};
const Chevron = ({ dir, w = 1.900, size = 8, c = '#505050' }) => (
  <svg width={size} height={size} viewBox="0 0 8 8"><path d={CHEVRONS[dir]} fill="none" stroke={c} strokeWidth={w} /></svg>
);

const PURPLE = '#800080';
const range = (n) => Array.from({ length: n }, (_, i) => i);

const Capacitor = ({ x, y, half, stem, gap, over = 0 }) => (
  <g fill="none" strokeWidth="1">
    <path d={`M${x - half} ${y + stem + 0.5}h${half * 2 + over}M${x - half} ${y + stem + gap + 0.5}h${half * 2 + over}`} stroke={PURPLE} />
    <path d={`M${x + 0.5} ${y}v${stem}M${x + 0.5} ${y + stem + gap}v${stem + over}`} stroke="#555" />
  </g>
);

const SchematicSvg = styled.svg`
  background: #fff;
`;

function Schematic() {
  return (
    <SchematicSvg width="1628" height="752" viewBox="33 213 1628 752">
      <g shapeRendering="crispEdges">
        {range(40).map((k) => <rect key={`x${k}`} x={Math.round(54.3 + 40.83 * k)} y="213" width="1" height="752" fill="#f0f0f0" />)}
        {range(19).map((k) => <rect key={`y${k}`} x="33" y={214 + Math.round(40.8 * k)} width="1627" height="1" fill="#f0f0f0" />)}
        <Capacitor x={339} y={541} half={41} stem={82} gap={41} over={1} />
        <Capacitor x={707} y={541} half={41} stem={82} gap={41} over={1} />
        <path d="M952.500 541v21" stroke={PURPLE} fill="none" />
        <path d="M931.500 562.500h41L952.500 582.500z" stroke={PURPLE} fill="none" />
        <path d="M1278.500 419v246" stroke={PURPLE} />
        <polyline
          fill="none"
          stroke={PURPLE}
          points="1238,501.500 1201.500,522.500 1175.500,554.500 1161.500,593.500 1162.500,637.500 1178.500,674.500 1206.500,705.500 1243.500,725 1285.500,730.500 1326.500,721 1361,697 1386,663.500 1396.500,622.500 1393.500,581.500 1375,544 1345,514 1319.500,501.500"
        />
      </g>
      <g fontFamily="Liberation Sans" fontSize="36" fill="#1540a0">
        <text x="565" y="513" textLength="283">Part Number=111</text>
        <text x="421" y="656" textLength="46">R2</text>
        <text x="788" y="656" textLength="44">R1</text>
      </g>
    </SchematicSvg>
  );
}

/* ---------- databook ---------- */

const Databook = styled.aside`
  width: 217px;
  margin-left: 4px;
  flex: none;
  display: flex;
  flex-direction: column;
`;
const PaneTitle = styled.div`
  height: 17px;
  display: flex;
  align-items: center;
  padding: 0 6px 1px 4px;
  background: linear-gradient(90deg, #bccbd9, #cfdeee);
`;
const PaneTools = styled.div`
  flex: 1;
  display: flex;
  align-items: center;
  justify-content: flex-end;
  gap: 9px;
`;
const PaneFrame = styled.div`
  height: 764px;
  margin-top: 1px;
  border: 1px solid #8f94a2;
  border-right-color: #b9bdc9;
  padding: 3px 4px 2px 3px;
  background: #f4f5fb;
`;
const PaneBody = styled.div`
  height: 757px;
  border-style: solid;
  border-width: 2px 1px 1px 2px;
  border-color: #77777b #e3e3e3 #e3e3e3 #77777b;
  background: #f0f0f0;
  display: grid;
  grid-template: 736px 18px / 25px 180px;
`;
const SideTools = styled.div`
  display: flex;
  flex-direction: column;
  align-items: center;
  padding-top: 6px;
`;
const SideItem = styled.div`
  height: ${(p) => p.$h}px;
  display: flex;
  align-items: flex-start;
`;
const SideRule = styled.div`
  width: 19px;
  height: 1px;
  margin-bottom: ${(p) => p.$gap}px;
  background: #9b9b9b;
`;
const PaneMain = styled.div`
  display: flex;
  flex-direction: column;
`;
const PageTabs = styled.div`
  display: flex;
  height: 22px;
  align-items: flex-end;
  padding-left: 2px;
`;
const PageTab = styled.div`
  width: ${(p) => p.$w}px;
  height: ${(p) => (p.$active ? 22 : 20)}px;
  display: flex;
  align-items: center;
  justify-content: center;
  background: ${(p) => (p.$active ? '#fff' : '#f0f0f0')};
  border: 1px solid #dcdcdc;
  border-bottom: none;
  padding-bottom: ${(p) => (p.$active ? 3 : 1)}px;
`;
const TabSpin = styled.div`
  width: 18px;
  height: 17px;
  margin: 0 -1px 4px 0;
  display: flex;
  align-items: center;
  justify-content: center;
  border: 1px solid #b4b4b4;
  background: #e8e8e8;
`;
const Page = styled.div`
  width: 178px;
  height: 394px;
  border: 1px solid #dcdcdc;
  outline: 2px solid #fff;
  outline-offset: -3px;
  display: flex;
  padding: 12px 0 0 8px;
  gap: 5px;
`;
const PageLeft = styled.div`
  display: flex;
  flex-direction: column;
  gap: 11px;
`;
const SmallBox = styled.div`
  width: 22px;
  height: 23px;
  background: #fff;
  border: 1px solid #7a7a7a;
`;
const ListBox = styled.div`
  width: 22px;
  height: 338px;
  border: 1px solid #828790;
  background: #f0f0f0;
  box-shadow: inset 0 0 0 1px #fff;
  padding: 2px 2px 0 3px;
`;
const ListScroll = styled.div`
  width: 15px;
  height: 316px;
  display: flex;
  flex-direction: column;
  align-items: center;
`;
const PageRight = styled.div`
  display: flex;
  flex-direction: column;
  align-items: flex-start;
  margin-left: -3px;
  padding-top: 1px;
`;
const FocusButton = styled.div`
  width: 96px;
  height: 21px;
  display: flex;
  align-items: center;
  justify-content: center;
  padding-bottom: 2px;
  background: #e1e1e1;
  border: 2px solid #0078d7;
`;
const CheckRow = styled.label`
  display: flex;
  align-items: center;
  height: 23px;
  gap: 3px;
  margin: ${(p) => (p.$first ? '4px 0 0 3px' : '0 0 0 3px')};
`;
const CheckBox = styled.span`
  width: 13px;
  height: 13px;
  background: #fff;
  border: 1px solid ${(p) => (p.$off ? '#cccccc' : '#333')};
`;
const Splitter = styled.div`
  height: 2px;
  margin-top: 6px;
  background: #696969;
  border-top: 1px solid #a0a0a0;
`;
const PlaceButton = styled.div`
  width: 160px;
  height: 21px;
  margin: 6px 0 10px 10px;
  display: flex;
  align-items: center;
  justify-content: center;
  padding-bottom: 2px;
  background: #e1e1e1;
  border: 1px solid #adadad;
`;
const Preview = styled.div`
  width: 162px;
  height: 242px;
  margin: 0 0 9px 9px;
  border: 1px solid #646464;
  background: #fff;
`;
const PartSelect = styled.div`
  margin-left: 9px;
`;
const SheetTabs = styled.div`
  grid-column: 1 / 3;
  display: flex;
  align-items: flex-start;
`;
const SheetArrow = styled.div`
  width: 16px;
  height: 16px;
  margin: 1px 1px 0 1px;
  display: flex;
  align-items: center;
  justify-content: center;
  background: #cccccc;
  border: 1px solid #bfbfbf;
`;
const SheetTab = styled.div`
  flex: 1;
  display: grid;
  > * { grid-area: 1 / 1; }
`;
const SheetTabText = styled.div`
  padding: 0 0 0 8px;
`;

/* ---------- bottom ---------- */

const BottomTabs = styled.div`
  height: 21px;
  flex: none;
  display: flex;
  padding: 1px 0 0 29px;
  gap: 14px;
`;
const BottomTab = styled.div`
  width: ${(p) => p.$w}px;
  height: 20px;
  display: flex;
  align-items: center;
  gap: 2px;
  padding-left: 3px;
  background: #f0f0f0;
  border-right: 1px solid #d4d4da;
`;
const StatusBar = styled.footer`
  height: 22px;
  flex: none;
  display: flex;
  align-items: center;
  background: #f0f0f0;
  border-top: 1px solid #d7d7d7;
`;
const StatusCell = styled.div`
  width: ${(p) => p.$w}px;
  height: 19px;
  flex: none;
  display: flex;
  align-items: center;
  justify-content: ${(p) => (p.$center ? 'center' : 'flex-start')};
  padding-left: ${(p) => p.$pad ?? 4}px;
  border-right: 1px solid #d7d7d7;
`;
const SizeGrip = styled.div`
  flex: 1;
  height: 19px;
  display: flex;
  justify-content: flex-end;
  align-items: flex-end;
  padding-right: 3px;
`;
const Lamp = styled.div`
  width: 11px;
  height: 11px;
  border-radius: 50%;
  border: 1px solid #b8901a;
  background: radial-gradient(circle at 40% 35%, #fff6a0, #ffd21c 50%, #d89a00);
`;

const MENUS = [
  ['文件(', 'F', 51, 36], ['编辑(', 'E', 51, 36], ['视图(', 'V', 52, 37], ['设置(', 'S', 51, 36], ['添加(', 'A', 53, 38],
  ['格式(', 'O', 54, 39], ['模拟(', 'M', 56, 41], ['工具(', 'T', 51, 36], ['窗口(', 'W', 56, 41], ['帮助(', 'H', 50, 38],
];

export default function App() {
  return (
    <>
      <Global />
      <Window>
        <TitleBar>
          <Icon name="logo" />
          <Caption>
            <Label size={13} width={602}>{'Xpedition Designer - D:\\WDIR\\EEVX.2.13\\DxProjects\\primitives\\primitives\\primitives.prj - [Schematic1.1]'}</Label>
          </Caption>
          <WinButtons>
            <svg width="11" height="11" viewBox="0 0 11 11"><path d="M0 5.500h10" stroke="#000" /></svg>
            <svg width="11" height="11" viewBox="0 0 11 11"><path d="M0.500 0.500h9v9h-9z" fill="none" stroke="#000" /></svg>
            <svg width="11" height="11" viewBox="0 0 11 11"><path d="M0.500 0.500l10 10M10.500 0.500l-10 10" stroke="#000" strokeWidth="1.100" /></svg>
          </WinButtons>
        </TitleBar>
        <MenuBar>
          <Grip />
          <Spacer $w={6} />
          {MENUS.map(([a, key, w, tw]) => (
            <MenuItem key={key} $w={w}><Label cjk size={11.5} width={tw}>{a}<u>{key}</u>)</Label></MenuItem>
          ))}
          <MenuSpace />
          <LayoutPicker>
            <Icon name="layouts" size={15} />
            <LayoutLabel><Label size={12} width={91}>Window Layouts:</Label></LayoutLabel>
            <SelectBox $w={145} $h={17} $pad="2px 4px 0 3px"><Label size={10} width={31}>Default</Label><Chevron dir="down" w={1.100} /></SelectBox>
          </LayoutPicker>
        </MenuBar>

        <ToolRows>
          {TOOLBARS.map((row, i) => (
            <ToolRow key={i}>
              {row.map((bar, j) => (
                <React.Fragment key={j}>
                  <Bar>
                    <Grip />
                    {bar.items.map((item, k) => <ToolItem key={k} item={item} />)}
                  </Bar>
                  {bar.more && <Overflow w={bar.more} />}
                </React.Fragment>
              ))}
            </ToolRow>
          ))}
        </ToolRows>

        <Work>
          <NaviStrip>
            <Icon name="naviTree" />
            <NaviText><Label vertical size={11.5} width={57} color="#666">Navigator</Label></NaviText>
          </NaviStrip>

          <DocColumn>
            <TabStrip>
              <DocTab $w={88} $shift={5}>
                <svg width="88" height="21" viewBox="0 0 88 21">
                  <defs><linearGradient id="idle" x2="0" y2="1"><stop offset="0" stopColor="#b9d3f4" /><stop offset="1" stopColor="#8fb0dc" /></linearGradient></defs>
                  <path d="M0 20.500L17 3q3-2.500 6-2.500h62l2.500 2v18z" fill="url(#idle)" stroke="#8a93a5" />
                </svg>
                <DocTabBody $pad={22} $gap={2}><Icon name="logo" /><Label cjk size={11.5} width={44}>开始页面</Label></DocTabBody>
              </DocTab>
              <DocTab $w={140} $shift={-14} $active>
                <svg width="140" height="22" viewBox="0 0 140 22">
                  <defs><linearGradient id="live" x2="0" y2="1"><stop offset="0" stopColor="#d3f8fe" /><stop offset="1" stopColor="#b1d8f1" /></linearGradient></defs>
                  <path d="M0 22L15 4q3-3.500 7-3.500h114q2.500 0 2.500 2.500v19" fill="url(#live)" stroke="#97a1ad" />
                </svg>
                <DocTabBody $pad={20} $gap={9}>
                  <Icon name="docLogo" />
                  <Label size={12} width={70}>Schematic1.1</Label>
                  <svg width="8" height="8" viewBox="0 0 8 8"><path d="M0.500 0.500l7 7M7.500 0.500l-7 7" stroke="#000" strokeWidth="1.600" /></svg>
                </DocTabBody>
              </DocTab>
              <TabMenu><Triangle w={9} /></TabMenu>
            </TabStrip>
            <Frame>
              <Sunken>
                <Viewport>
                  <Schematic />
                  <ScrollTrack $vertical>
                    <ScrollEnd $w={16} $h={16}><Chevron dir="up" /></ScrollEnd>
                    <Spacer $h={137} />
                    <Thumb $w={16} $h={120} />
                    <Grow />
                    <ScrollEnd $w={16} $h={19}><Chevron dir="down" /></ScrollEnd>
                  </ScrollTrack>
                  <ScrollTrack>
                    <ScrollEnd $w={17} $h={16}><Chevron dir="left" /></ScrollEnd>
                    <Spacer $w={286} />
                    <Thumb $w={373} $h={15} />
                    <Grow />
                    <ScrollEnd $w={19} $h={16}><Chevron dir="right" /></ScrollEnd>
                  </ScrollTrack>
                </Viewport>
              </Sunken>
            </Frame>
          </DocColumn>

          <Databook>
            <PaneTitle>
              <Label size={12} width={52}>Databook</Label>
              <PaneTools>
                <Triangle w={9} />
                <svg width="7" height="9" viewBox="0 0 7 9"><path d="M1.500 0.500h4v5h-4zM4.500 0v6M0 5.500h7M3.500 6v3" fill="none" stroke="#000" /></svg>
                <svg width="9" height="9" viewBox="0 0 9 9"><path d="M1 1l7 7M8 1l-7 7" stroke="#000" strokeWidth="1.600" /></svg>
              </PaneTools>
            </PaneTitle>
            <PaneFrame>
              <PaneBody>
                <SideTools>
                  <SideItem $h={23}><Icon name="binAdd" /></SideItem>
                  <SideItem $h={23}><Icon name="booksOff" /></SideItem>
                  <SideRule $gap={5} />
                  <SideItem $h={22}><Icon name="placeOff" /></SideItem>
                  <SideItem $h={22}><Icon name="netOff" /></SideItem>
                  <SideRule $gap={4} />
                  <SideItem $h={22}><Icon name="binOff" /></SideItem>
                </SideTools>
                <PaneMain>
                  <PageTabs>
                    <PageTab $w={60}><Label width={49}>Part View</Label></PageTab>
                    <PageTab $w={82} $active><Label width={67}>Symbol View</Label></PageTab>
                    <Spacer $w={1} />
                    <TabSpin><svg width="4" height="6" viewBox="0 0 4 6"><path d="M3.500 0v6L0.500 3z" /></svg></TabSpin>
                    <TabSpin><svg width="4" height="6" viewBox="0 0 4 6"><path d="M0.500 0v6L3.500 3z" /></svg></TabSpin>
                  </PageTabs>
                  <Page>
                    <PageLeft>
                      <SmallBox />
                      <ListBox>
                        <ListScroll>
                          <ScrollEnd $w={15} $h={16}><Chevron dir="up" /></ScrollEnd>
                          <Spacer $h={20} />
                          <Thumb $w={15} $h={263} />
                          <ScrollEnd $w={15} $h={17}><Chevron dir="down" /></ScrollEnd>
                        </ListScroll>
                      </ListBox>
                    </PageLeft>
                    <PageRight>
                      <FocusButton><Label cjk size={11} width={66}>清除筛选条件</Label></FocusButton>
                      <CheckRow $first><CheckBox /><Label cjk size={11} width={44}>添加网络</Label></CheckRow>
                      <CheckRow><CheckBox $off /><Label cjk size={11} width={55} color="#838383">添加网络名</Label></CheckRow>
                    </PageRight>
                  </Page>
                  <Splitter />
                  <PlaceButton><Label cjk size={11} width={44}>放置符号</Label></PlaceButton>
                  <Preview>
                    <svg width="160" height="240" viewBox="1729 669 160 240">
                      <g shapeRendering="crispEdges">
                        {range(11).map((k) => <rect key={`x${k}`} x={Math.round(1732 + 15.62 * k)} y="669" width="1" height="240" fill="#f0f0f0" />)}
                        {range(16).map((k) => <rect key={`y${k}`} x="1729" y={Math.round(670.2 + 15.65 * k)} width="160" height="1" fill="#f0f0f0" />)}
                        <Capacitor x={1809} y={749} half={16} stem={32} gap={15} />
                      </g>
                      <text x="1739" y="694" fontFamily="Liberation Sans" fontWeight="700" fontSize="14" textLength="15" lengthAdjust="spacingAndGlyphs">0?</text>
                    </svg>
                  </Preview>
                  <PartSelect>
                    <SelectBox $w={162} $h={22}><Label size={12} width={113}>Symbol Discrete:cap.1</Label><Chevron dir="down" w={1.100} size={9} /></SelectBox>
                  </PartSelect>
                </PaneMain>
                <SheetTabs>
                  <SheetArrow><svg width="5" height="8" viewBox="0 0 5 8"><path d="M5 0v8L0 4z" fill="#9a9a9a" /></svg></SheetArrow>
                  <SheetArrow><svg width="5" height="8" viewBox="0 0 5 8"><path d="M0 0v8L5 4z" fill="#9a9a9a" /></svg></SheetArrow>
                  <SheetTab>
                    <svg width="169" height="18" viewBox="0 0 169 18"><path d="M0 0.500L6.500 16.500H58L64.500 0.500H169" fill="none" stroke="#000" /><path d="M1.500 0.500L7 16h50.500L64 0.500z" fill="#fff" /></svg>
                    <SheetTabText><Label cjk bold size={12} width={43}>CL 视图</Label></SheetTabText>
                  </SheetTab>
                </SheetTabs>
              </PaneBody>
            </PaneFrame>
          </Databook>
        </Work>

        <BottomTabs>
          <BottomTab $w={58}><Icon name="find" /><Label size={12} width={34} color="#666">Search</Label></BottomTab>
          <BottomTab $w={62}><Icon name="outTab" /><Label size={12} width={38} color="#666">Output</Label></BottomTab>
        </BottomTabs>

        <StatusBar>
          <StatusCell $w={741} $pad={6}><Label width={91}>0 objects selected</Label></StatusCell>
          <StatusCell $w={66}><Label width={31}>Select</Label></StatusCell>
          <StatusCell $w={112}><Label width={73}>6.814, 7.981 in</Label></StatusCell>
          <StatusCell $w={171}><Label width={124}>DX=-0.002, DY=0.000 in</Label></StatusCell>
          <StatusCell $w={58}><Label width={38}>Sheet 1</Label></StatusCell>
          <StatusCell $w={29}><Label width={23} color="#888">CAP</Label></StatusCell>
          <StatusCell $w={26} />
          <StatusCell $w={22} $pad={1} $center><Lamp /></StatusCell>
          <StatusCell $w={22} $pad={1} $center><Icon name="online" /></StatusCell>
          <StatusCell $w={186}><Label width={70}>Online - local</Label></StatusCell>
          <StatusCell $w={66} />
          <StatusCell $w={29} />
          <StatusCell $w={358} $pad={6}><Label width={351}>{'Library: D:\\XpetitionV2.13\\...\\examples\\SampleLib2007\\SampleLib.ln'}</Label></StatusCell>
          <SizeGrip>
            <svg width="8" height="8" viewBox="0 0 8 8"><path d="M6 0h2v2H6zM3 3h2v2H3zM6 3h2v2H6zM0 6h2v2H0zM3 6h2v2H3zM6 6h2v2H6z" fill="#bcbcbc" /></svg>
          </SizeGrip>
        </StatusBar>
      </Window>
    </>
  );
}
